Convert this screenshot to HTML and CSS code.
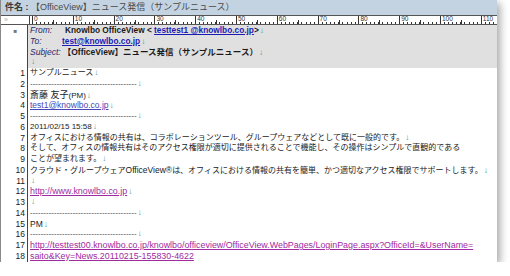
FILE: index.html
```html
<!DOCTYPE html>
<html lang="ja">
<head>
    <meta charset="UTF-8">
    <title>件名</title>
    <link rel="stylesheet" href="styles.css">
</head>
<body>
<div class="window">
    <div class="titlebar"><b>件名 :</b> 【OfficeView】ニュース発信（サンプルニュース）</div>

    <div class="row ruler-row">
        <div class="num num--mark">»</div>
        <div class="ruler">
            <span class="seg">0</span><span class="seg">10</span><span class="seg">20</span><span class="seg">30</span>
            <span class="seg">40</span><span class="seg">50</span><span class="seg">60</span><span class="seg">70</span>
            <span class="seg">80</span><span class="seg">90</span><span class="seg">100</span><span class="seg">110</span>
        </div>
    </div>

    <div class="row head"><div class="num"><span class="square">■</span></div>
        <div class="text"><i class="label">From:</i><b class="hval">Knowlbo OfficeView &lt; <a class="hlink">testtest1 @knowlbo.co.jp</a>&gt;</b><span class="ret">↓</span></div></div>
    <div class="row head"><div class="num"></div>
        <div class="text"><i class="label label--to">To:</i><b class="hval"><a class="hlink">test@knowlbo.co.jp</a></b><span class="ret">↓</span></div></div>
    <div class="row head"><div class="num"></div>
        <div class="text"><i class="label label--subj">Subject:</i><b class="subj">【OfficeView】ニュース発信（サンプルニュース）</b><span class="ret">↓</span></div></div>
    <div class="row head"><div class="num"></div>
        <div class="text"><span class="ret">↓</span></div></div>

    <div class="row"><div class="num">1</div><div class="text">サンプルニュース<span class="ret">↓</span></div></div>
    <div class="row"><div class="num">2</div><div class="text"><span class="dash">----------------------------------------</span><span class="ret">↓</span></div></div>
    <div class="row"><div class="num">3</div><div class="text"><span class="name">斎藤 友子</span>(PM)<span class="ret">↓</span></div></div>
    <div class="row"><div class="num">4</div><div class="text"><a class="mail">test1@knowlbo.co.jp</a><span class="ret">↓</span></div></div>
    <div class="row"><div class="num">5</div><div class="text"><span class="dash">----------------------------------------</span><span class="ret">↓</span></div></div>
    <div class="row"><div class="num">6</div><div class="text">2011/02/15 15:58<span class="ret">↓</span></div></div>
    <div class="row"><div class="num">7</div><div class="text">オフィスにおける情報の共有は、コラボレーションツール、グループウェアなどとして既に一般的です。<span class="ret">↓</span></div></div>
    <div class="row"><div class="num">8</div><div class="text">そして、オフィスの情報共有はそのアクセス権限が適切に提供されることで機能し、その操作はシンプルで直観的である</div></div>
    <div class="row"><div class="num">9</div><div class="text">ことが望まれます。<span class="ret">↓</span></div></div>
    <div class="row"><div class="num">10</div><div class="text">クラウド・グループウェア<span class="latin">OfficeView®</span>は、オフィスにおける情報の共有を簡単、かつ適切なアクセス権限でサポートします。<span class="ret">↓</span></div></div>
    <div class="row"><div class="num">11</div><div class="text"><span class="ret">↓</span></div></div>
    <div class="row"><div class="num">12</div><div class="text"><a class="url">http://www.knowlbo.co.jp</a><span class="ret">↓</span></div></div>
    <div class="row"><div class="num">13</div><div class="text"><span class="ret">↓</span></div></div>
    <div class="row"><div class="num">14</div><div class="text"><span class="dash">----------------------------------------</span><span class="ret">↓</span></div></div>
    <div class="row"><div class="num">15</div><div class="text latin">PM<span class="ret">↓</span></div></div>
    <div class="row"><div class="num">16</div><div class="text"><span class="dash">----------------------------------------</span><span class="ret">↓</span></div></div>
    <div class="row"><div class="num">17</div><div class="text"><a class="url">http://testtest00.knowlbo.co.jp/knowlbo/officeview/OfficeView.WebPages/LoginPage.aspx?OfficeId=&amp;UserName=</a></div></div>
    <div class="row"><div class="num">18</div><div class="text"><a class="url">saito&amp;Key=News.20110215-155830-4622</a></div></div>
</div>
</body>
</html>
```
FILE: styles.css
```css
html, body {
    margin: 0;
    padding: 0;
    background: #fff;
}

.window {
    width: 497px;
    height: 262px;
    overflow: hidden;
    background: #fff;
    border-left: 1px solid #8a8a8a;
    box-sizing: border-box;
    box-shadow: 3px 3px 8px rgba(0, 0, 0, 0.35);
    font-family: "Liberation Sans", "Noto Sans CJK JP", sans-serif;
    font-size: 8px;
    color: #1a1a1a;
}

.titlebar {
    height: 15px;
    line-height: 15px;
    background: #c4d3e1;
    padding-left: 4px;
    color: #4a4a4a;
    font-size: 9px;
    white-space: nowrap;
}

.titlebar b {
    color: #3a3a3a;
}

.row {
    display: flex;
    height: 10.75px;
    line-height: 10.75px;
    white-space: nowrap;
}

.num {
    width: 24px;
    flex: none;
    text-align: right;
    padding-right: 2px;
    border-right: 1px solid #444;
    font-size: 8.5px;
    color: #1a1a1a;
}

.text {
    flex: 1;
    padding-left: 2px;
    overflow: hidden;
}

.ruler-row {
    height: 10px;
    border-top: 1px solid #555;
    border-bottom: 1px solid #555;
    box-sizing: border-box;
    line-height: 8px;
}

.num--mark {
    text-align: left;
    padding-left: 3px;
    width: 23px;
    color: #b0b0b0;
    font-size: 7px;
}

.ruler {
    display: flex;
    padding-left: 2px;
    flex: 1;
    overflow: hidden;
}

.seg {
    flex: none;
    width: 40.8px;
    height: 8px;
    box-sizing: border-box;
    border-left: 1px solid #333;
    padding-left: 1px;
    font-size: 6.5px;
    line-height: 6px;
    color: #333;
    background:
        linear-gradient(#333, #333) 20px 4px / 1px 4px no-repeat,
        repeating-linear-gradient(to right, transparent 0 3.08px, #333 3.08px 4.08px) 0 6px / 100% 2px no-repeat;
}

.head .text {
    background: #e0e0e0;
}

.square {
    display: inline-block;
    margin-right: 8px;
    color: #777;
    font-size: 6px;
}

.label {
    display: inline-block;
    width: 35px;
    font-size: 8.5px;
    color: #2a2a70;
}

.label--to {
    width: 32px;
}

.label--subj {
    width: auto;
    margin-right: 2px;
}

.hval {
    font-size: 8.3px;
}

.hlink {
    color: #1c1cb4;
    text-decoration: underline;
}

.subj {
    font-size: 8.5px;
}

.ret {
    color: #3a9a9a;
    margin-left: 1px;
}

.dash {
    color: #444;
}

.name {
    font-size: 9px;
}

.latin {
    font-size: 8.5px;
}

.mail {
    color: #4646b8;
    font-size: 8.5px;
    text-decoration: underline;
}

.url {
    color: #a02aa0;
    font-size: 8.9px;
    text-decoration: underline;
}
```
